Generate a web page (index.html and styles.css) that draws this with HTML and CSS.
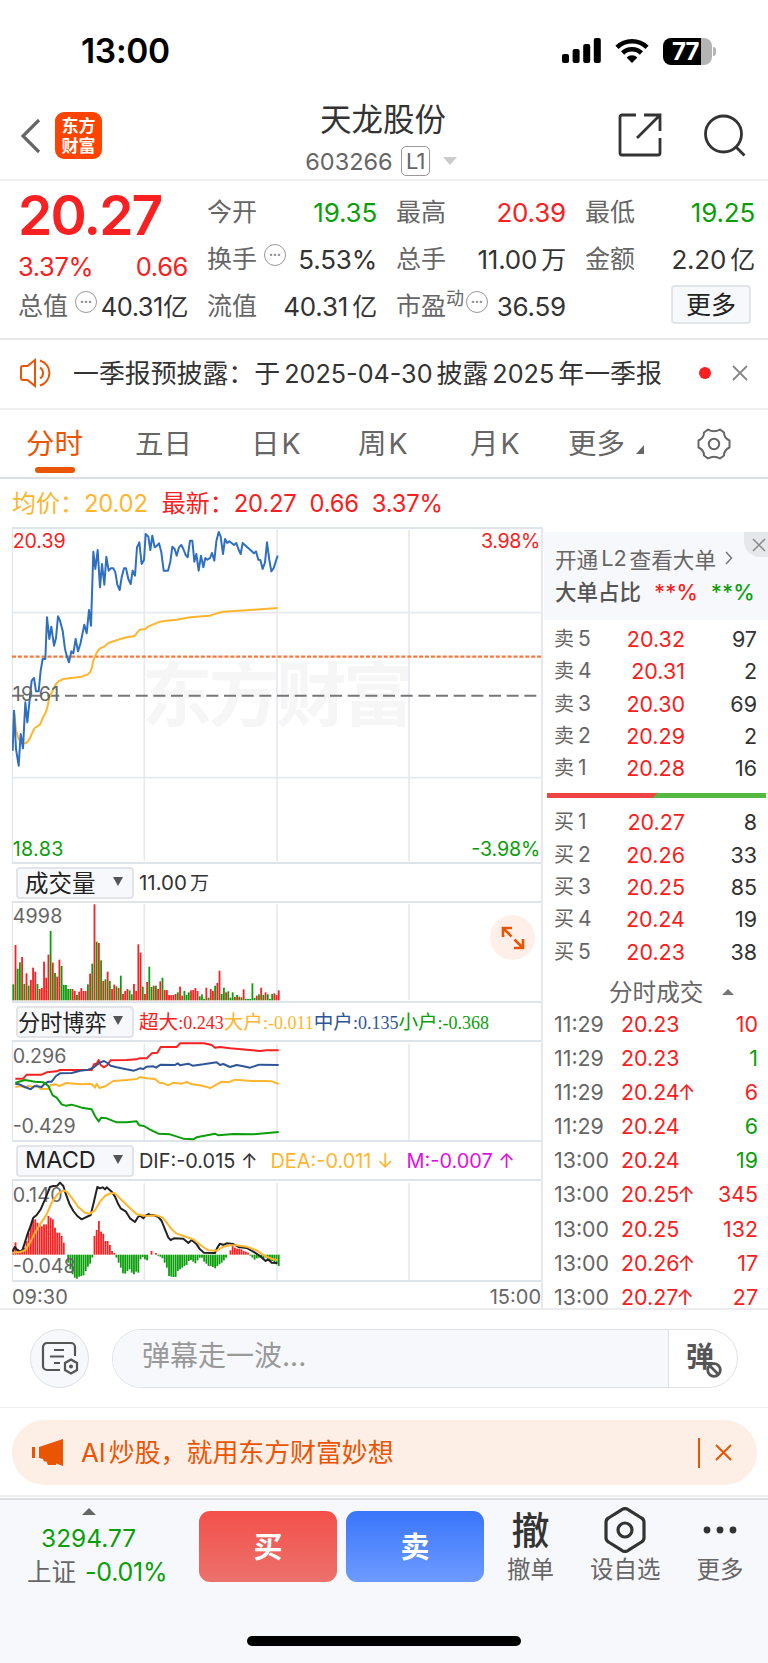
FILE: index.html
```html
<!DOCTYPE html>
<html lang="zh-CN">
<head>
  <meta charset="UTF-8" />
  <title>天龙股份 603266</title>
  <link rel="stylesheet" href="styles.css">
</head>
<body>
  <div class="status">
    <div class="clock">13:00</div>
    <div class="status-icons">
      <svg width="39" height="26" viewBox="0 0 39 26"><rect x="0" y="16" width="7" height="9" rx="2"/><rect x="10.6" y="11" width="7" height="14" rx="2"/><rect x="21.2" y="6" width="7" height="19" rx="2"/><rect x="31.8" y="0" width="7" height="25" rx="2"/></svg>
      <svg width="34" height="26" viewBox="0 0 34 26"><g fill="none" stroke="#000" stroke-width="4.6"><path d="M2 9.3A21.5 21.5 0 0 1 32 9.3"/><path d="M7.6 15A13.6 13.6 0 0 1 26.4 15"/></g><path d="M17 25l-5.4-5.6a7.8 7.8 0 0 1 10.8 0z"/></svg>
      <div class="battery"><span>77</span></div>
    </div>
  </div>

  <header class="header">
    <svg class="back" width="21" height="36" viewBox="0 0 21 36"><path d="M19 2L3 18l16 16" fill="none" stroke="#666" stroke-width="3.2"/></svg>
    <div class="logo">东方<br>财富</div>
    <div class="stock">
      <div class="stock-name">天龙股份</div>
      <div class="stock-code">603266<span class="level">L1</span><i class="tri-down"></i></div>
    </div>
    <svg class="share" width="44" height="44" viewBox="0 0 44 44"><path d="M18 2H4a2 2 0 0 0-2 2v36a2 2 0 0 0 2 2h36a2 2 0 0 0 2-2V25M26 2h16v16M42 2L19 25" fill="none" stroke="#333" stroke-width="2.8"/></svg>
    <svg class="search" width="44" height="44" viewBox="0 0 44 44"><circle cx="20.5" cy="20" r="18" fill="none" stroke="#333" stroke-width="2.8"/><path d="M33 33l8.500 8.500" stroke="#333" stroke-width="2.800"/></svg>
  </header>

  <section class="quote">
    <div class="quote-main">
      <div class="price">20.27</div>
      <div class="change red"><span>3.37%</span><span>0.66</span></div>
      <div class="cell cap"><span class="lbl">总值<i class="dots">•••</i></span><span class="val">40.31亿</span></div>
    </div>
    <div class="quote-grid">
      <div class="cell"><span class="lbl">今开</span><span class="val green">19.35</span></div>
      <div class="cell"><span class="lbl">最高</span><span class="val red">20.39</span></div>
      <div class="cell"><span class="lbl">最低</span><span class="val green">19.25</span></div>
      <div class="cell"><span class="lbl">换手<i class="dots">•••</i></span><span class="val">5.53%</span></div>
      <div class="cell"><span class="lbl">总手</span><span class="val">11.00<b>万</b></span></div>
      <div class="cell"><span class="lbl">金额</span><span class="val">2.20<b>亿</b></span></div>
      <div class="cell"><span class="lbl">流值</span><span class="val">40.31<b>亿</b></span></div>
      <div class="cell"><span class="lbl">市盈<sup>动</sup><i class="dots tight">•••</i></span><span class="val">36.59</span></div>
      <div class="cell end"><button class="more">更多</button></div>
    </div>
  </section>

  <section class="notice">
    <svg width="34" height="30" viewBox="0 0 34 30"><g fill="none" stroke="#ea5504" stroke-width="2"><path d="M15 2L7.500 8H3a2 2 0 0 0-2 2v10a2 2 0 0 0 2 2h4.500l7.500 6z"/><path d="M20 9.500a6.500 6.500 0 0 1 0 11M20 2.500a13 13 0 0 1 0 25"/></g></svg>
    <p>一季报预披露：于<span>2025-04-30</span>披露<span>2025</span>年一季报</p>
    <i class="dot"></i>
    <svg width="16" height="16" viewBox="0 0 16 16"><path d="M1 1l14 14M15 1L1 15" stroke="#888" stroke-width="1.800"/></svg>
  </section>

  <nav class="tabs">
    <a class="active">分时</a><a>五日</a><a>日<span>K</span></a><a>周<span>K</span></a><a>月<span>K</span></a>
    <a>更多<i class="corner"></i></a>
    <svg width="34" height="32" viewBox="0 0 34 32"><g fill="none" stroke="#666" stroke-width="2"><path d="M11 1.500Q17 5 23 1.500L27 4.500Q27 10 32.500 12.500V19.500Q27 22 27 27.500L23 30.500Q17 27 11 30.500L7 27.500Q7 22 1.500 19.500V12.500Q7 10 7 4.500Z" stroke-linejoin="round"/><circle cx="17" cy="16" r="5.200"/></g></svg>
  </nav>

  <div class="legend"><span class="yellow">均价：<b>20.02</b></span><span class="red">最新：<b>20.27</b><b>0.66</b><b>3.37%</b></span></div>

  <main class="board">
    <div class="charts">
      <div class="panel panel-price">
        <svg width="530" height="335" viewBox="36 22 1590 1005">
          <g fill="#f6f6f6"><text class="watermark" x="425" y="602" textLength="816">东方财富</text></g>
          <path class="grid-line" d="M433 28V1020M831 28V1020M1227 28V1020M36 276H1626M36 771H1626"/>
          <path class="last" d="M36 408H1626"/>
          <path class="close" d="M36 525H1618"/>
          <polyline class="avg" points="40,620 43,578 48,630 56,655 68,668 76,668 84,662 90,652 96,638 104,622 120,612 128,592 136,578 142,560 148,532 160,505 168,490 176,482 190,475 245,468 262,462 270,455 276,440 280,420 286,405 292,392 300,383 312,378 325,367 358,356 380,350 404,346 412,335 420,327 436,325 444,318 480,303 500,300 530,297 570,290 630,285 650,278 670,273 750,268 833,262"/>
          <polyline class="price-line" points="38,690 42,570 48,685 56,735 62,640 69,683 76,545 82,605 95,480 102,472 108,512 116,512 122,450 128,415 136,415 141,290 148,355 154,318 162,375 168,352 174,287 180,300 188,330 195,385 201,408 207,425 214,392 220,398 227,355 234,392 241,370 253,312 260,338 267,268 273,315 280,93 286,145 293,88 300,200 306,130 313,192 319,108 326,150 332,143 340,143 346,155 352,192 359,208 365,170 372,143 378,143 385,175 392,190 398,150 405,165 411,80 418,65 425,130 432,118 437,40 445,48 451,88 457,45 464,80 471,75 477,68 484,95 491,150 504,150 511,123 517,78 524,85 530,105 537,80 544,73 550,85 557,103 563,110 570,60 577,60 583,123 589,100 596,150 603,105 610,140 616,112 622,117 630,112 636,97 643,120 649,62 656,34 662,48 669,100 675,55 682,67 688,62 702,73 709,67 715,85 722,100 728,67 762,98 768,92 775,117 781,118 788,145 795,125 801,65 808,118 814,152 821,142 833,105"/>
          <g class="axis">
            <text x="38" y="81" class="f-red" textLength="159">20.39</text>
            <text x="38" y="542" textLength="140">19.61</text>
            <text x="38" y="1005" class="f-green" textLength="152">18.83</text>
            <text x="1443" y="81" class="f-red" textLength="178">3.98%</text>
            <text x="1414" y="1005" class="f-green" textLength="207">-3.98%</text>
          </g>
        </svg>
      </div>

      <div class="bar-head"><button>成交量<i></i></button><span class="num">11.00<b>万</b></span></div>
      <div class="panel panel-volume">
        <svg width="530" height="100" viewBox="36 123 1590 300">
          <path class="grid-line" d="M433 130V418M831 130V418M1227 130V418"/>
          <g id="volume"></g>
          <g class="axis"><text x="38" y="187" textLength="149">4998</text></g>
        </svg>
        <div class="expand"><svg width="24" height="24" viewBox="0 0 24 24"><path d="M2 11V2h9M2.500 2.500l8 8M13.500 13.500l8 8M13 22h9v-9" fill="none" stroke="#ea5504" stroke-width="2.600"/></svg></div>
      </div>

      <div class="bar-head game"><button>分时博弈<i></i></button><p><span class="red">超大<b>:0.243</b></span><span class="yellow">大户<b>:-0.011</b></span><span class="blue">中户<b>:0.135</b></span><span class="green">小户<b>:-0.368</b></span></p></div>
      <div class="panel panel-game">
        <svg width="530" height="101" viewBox="36 540 1590 303">
          <path class="grid-line" d="M433 548V838M831 548V838M1227 548V838"/>
          <g class="axis"><text x="38" y="605" textLength="161">0.296</text><text x="38" y="817" textLength="189">-0.429</text></g>
          <polyline class="line s-yellow" points="46,678 60,675 75,680 85,675 100,678 110,672 122,684 145,683 152,672 168,670 178,675 200,666 240,670 270,668 278,672 285,680 290,668 298,681 315,676 340,660 380,657 410,654 420,648 440,652 465,654 478,665 490,667 505,673 520,665 545,668 560,663 575,670 600,673 632,681 645,673 665,662 685,664 705,656 755,660 790,660 815,661 836,669"/>
          <polyline class="line s-red" points="46,653 70,653 80,641 125,641 140,634 170,631 180,627 275,627 282,610 290,608 296,597 302,612 312,619 322,612 332,598 380,597 410,595 418,592 440,592 455,577 472,575 482,558 530,558 540,547 612,547 635,552 645,560 660,558 690,562 740,566 780,570 800,568 836,568"/>
          <polyline class="line s-blue" points="46,668 58,670 75,678 92,685 104,675 125,678 132,670 145,662 155,662 168,645 180,637 215,636 240,629 265,626 280,620 290,612 300,605 312,600 322,606 332,614 350,619 375,624 402,629 420,622 430,624 440,617 460,616 468,620 482,611 525,612 533,607 540,613 565,608 578,614 610,610 650,604 660,612 670,609 690,618 710,612 730,616 750,620 778,611 836,612"/>
          <polyline class="line s-green" points="46,665 75,657 105,662 130,664 145,675 158,703 170,710 185,730 197,734 215,731 245,740 275,745 285,765 296,781 304,770 320,772 350,784 380,784 410,781 418,793 432,795 450,806 475,818 510,820 550,833 580,835 590,829 645,818 655,823 700,819 760,820 836,813"/>
        </svg>
      </div>

      <div class="bar-head macd"><button>MACD<i></i></button><p><span>DIF:-0.015 ↑</span><span class="yellow">DEA:-0.011 ↓</span><span class="magenta">M:-0.007 ↑</span></p></div>
      <div class="panel panel-macd">
        <svg width="530" height="102" viewBox="36 297 1590 306">
          <path class="grid-line" d="M433 306V596M831 306V596M1227 306V596"/>
          <g id="macd"></g>
          <g class="axis"><text x="38" y="363" textLength="150">0.140</text><text x="38" y="575" textLength="189">-0.048</text></g>
          <polyline class="line s-black" points="38,512 44,498 52,507 62,512 68,505 76,480 84,455 90,440 100,410 110,402 122,385 135,355 150,318 160,315 172,314 180,305 190,315 196,335 208,368 220,390 232,405 245,415 272,402 280,370 292,318 300,322 308,319 315,325 320,319 335,332 345,347 355,370 362,382 378,392 390,412 405,423 414,408 420,404 430,412 437,404 446,399 452,403 460,402 475,408 485,420 495,445 505,470 512,477 522,472 550,473 565,486 575,477 590,490 600,505 612,515 645,516 652,500 660,488 670,492 680,487 700,489 715,498 740,501 765,515 780,525 797,540 804,535 815,545 832,546"/>
          <polyline class="line s-yellow" points="38,515 60,513 75,508 90,485 105,455 120,430 140,400 155,365 172,340 190,328 200,332 215,350 235,378 255,395 270,398 285,388 300,362 315,345 330,337 345,337 360,352 380,372 410,400 440,405 470,403 488,410 500,425 515,445 530,458 550,465 580,475 605,495 625,508 650,509 670,497 690,493 710,493 740,497 770,508 795,525 820,535 833,537"/>
        </svg>
      </div>
      <div class="times"><span>09:30</span><span>15:00</span></div>
    </div>

    <aside class="side">
      <div class="l2">
        <div class="l2-link">开通<span>L2</span>查看大单<svg width="8" height="14" viewBox="0 0 8 14"><path d="M1 1l5.500 6L1 13" fill="none" stroke="#777" stroke-width="1.500"/></svg></div>
        <div class="l2-ratio">大单占比<span class="red">**%</span><span class="green">**%</span></div>
        <div class="l2-close"><svg width="14" height="14" viewBox="0 0 14 14"><path d="M1 1l12 12M13 1L1 13" stroke="#888" stroke-width="1.500"/></svg></div>
      </div>
      <div class="book">
        <div><span>卖<b>5</b></span><em>20.32</em><u>97</u></div>
        <div><span>卖<b>4</b></span><em>20.31</em><u>2</u></div>
        <div><span>卖<b>3</b></span><em>20.30</em><u>69</u></div>
        <div><span>卖<b>2</b></span><em>20.29</em><u>2</u></div>
        <div><span>卖<b>1</b></span><em>20.28</em><u>16</u></div>
      </div>
      <div class="ratio"></div>
      <div class="book">
        <div><span>买<b>1</b></span><em>20.27</em><u>8</u></div>
        <div><span>买<b>2</b></span><em>20.26</em><u>33</u></div>
        <div><span>买<b>3</b></span><em>20.25</em><u>85</u></div>
        <div><span>买<b>4</b></span><em>20.24</em><u>19</u></div>
        <div><span>买<b>5</b></span><em>20.23</em><u>38</u></div>
      </div>
      <div class="deal-title">分时成交<i></i></div>
      <div class="deals">
        <div><span>11:29</span><em>20.23</em><u class="red">10</u></div>
        <div><span>11:29</span><em>20.23</em><u class="green">1</u></div>
        <div><span>11:29</span><em>20.24<s>↑</s></em><u class="red">6</u></div>
        <div><span>11:29</span><em>20.24</em><u class="green">6</u></div>
        <div><span>13:00</span><em>20.24</em><u class="green">19</u></div>
        <div><span>13:00</span><em>20.25<s>↑</s></em><u class="red">345</u></div>
        <div><span>13:00</span><em>20.25</em><u class="red">132</u></div>
        <div><span>13:00</span><em>20.26<s>↑</s></em><u class="red">17</u></div>
        <div><span>13:00</span><em>20.27<s>↑</s></em><u class="red">27</u></div>
      </div>
    </aside>
  </main>

  <section class="danmu">
    <div class="round"><svg width="38" height="36" viewBox="0 0 38 36"><g fill="none" stroke="#555" stroke-width="2.200"><path d="M19 29H6a4 4 0 0 1-4-4V6a4 4 0 0 1 4-4h24a4 4 0 0 1 4 4v9"/><path d="M13 9h10M9 15.500h14M13 22h6"/><path d="M30 18.500l6 3.500v7l-6 3.500-6-3.500v-7z"/></g><circle cx="30" cy="25.500" r="2" fill="#555"/></svg></div>
    <div class="field">
      <div class="placeholder">弹幕走一波...</div>
      <div class="toggle">弹<svg width="16" height="16" viewBox="0 0 16 16"><circle cx="8" cy="8" r="6.300" fill="#fff" stroke="#555" stroke-width="2.800"/><path d="M4 4l8 8" stroke="#555" stroke-width="2.600"/></svg></div>
    </div>
  </section>

  <section class="promo">
    <div class="promo-box">
      <svg width="31" height="27" viewBox="0 0 31 27"><path d="M0 8h3v11H0zM7 8L31 0v27l-7-2.500V26h-8l-1.500-3.500H12L11 20l-4-1z" fill="#ea5504"/></svg>
      <p>AI<span>炒股，就用东方财富妙想</span></p>
      <i class="bar"></i>
      <svg width="17" height="17" viewBox="0 0 17 17"><path d="M1 1l15 15M16 1L1 16" stroke="#ea5504" stroke-width="2"/></svg>
    </div>
  </section>

  <footer class="footer">
    <div class="index"><i></i><div class="green">3294.77</div><div>上证 <span class="green">-0.01%</span></div></div>
    <button class="buy">买</button>
    <button class="sell">卖</button>
    <div class="tool t1"><div class="glyph">撤</div>撤单</div>
    <div class="tool t2"><div class="glyph"><svg width="42" height="46" viewBox="0 0 42 46"><g fill="none" stroke="#333" stroke-width="3.200"><path d="M17.500 2.800a6 6 0 0 1 7 0l13 8.200a5 5 0 0 1 2.500 4.300v15.400a5 5 0 0 1-2.500 4.300l-13 8.200a6 6 0 0 1-7 0l-13-8.200A5 5 0 0 1 2 30.700V15.300A5 5 0 0 1 4.500 11z"/><circle cx="21" cy="23" r="7"/></g></svg></div>设自选</div>
    <div class="tool t3"><div class="glyph"><svg width="34" height="8" viewBox="0 0 34 8"><g fill="#333"><circle cx="4" cy="4" r="3.400"/><circle cx="17" cy="4" r="3.400"/><circle cx="30" cy="4" r="3.400"/></g></svg></div>更多</div>
    <div class="home"></div>
  </footer>

  <script>
    const STEP = 6.58;
    const START = 40;

    // one entry per minute: r = up, g = down, number = top of the bar
    const volume = "g370 r252 g323 g304 r288 g369 r337 g374 r357 r320 r332 g369 r384 r381 r302 r350 r281 g210 r305 g336 r347 r296 g315 g372 g372 g384 g384 r384 r390 g402 r392 r381 r390 r390 g370 r338 g308 r130 g242 r246 g298 r360 g355 r332 g360 r384 r371 g376 r381 g344 r399 r390 r384 g388 g400 r369 r390 r250 r275 g377 r399 r363 g317 g378 r374 g374 r384 r361 g350 r387 r387 r402 r402 r402 r399 g394 r377 r404 g390 g402 g394 r388 r387 r381 r390 g406 g400 g414 r380 g410 r384 r390 g374 r366 r329 g399 g380 r394 g391 g410 g394 r408 g402 r407 g409 r385 g414 g414 g414 g367 g411 r404 g400 r380 g402 r394 g400 g414 g399 r397 r402 r388".split(" ");

    const macd = [503,484,505,512,508,500,480,455,432,415,415,425,432,436,430,430,405,410,415,440,455,455,465,485,
      521,545,565,580,590,593,587,585,583,570,557,548,530,465,447,420,452,458,480,480,492,510,516,
      530,545,560,577,578,570,565,575,580,572,575,535,528,535,538,521,510,521,516,524,527,532,545,560,585,587,588,588,
      570,565,560,555,552,540,537,542,547,538,530,530,542,548,555,555,558,562,555,550,545,538,530,521,
      508,495,500,503,503,505,510,512,515,524,530,536,532,530,530,536,530,535,540,540,545,550,555,545,538,532,530];

    function bar(group, i, top, base, color) {
      const r = document.createElementNS("http://www.w3.org/2000/svg", "rect");
      r.setAttribute("x", START + i * STEP - 2.7);
      r.setAttribute("y", Math.min(top, base));
      r.setAttribute("width", 5.4);
      r.setAttribute("height", Math.abs(top - base));
      r.setAttribute("fill", color);
      group.appendChild(r);
    }

    const volumeGroup = document.getElementById("volume");
    volume.forEach((v, i) => {
      bar(volumeGroup, i, Number(v.slice(1)), 418, v[0] === "r" ? "#f82020" : "#0a9e0a");
    });

    const macdGroup = document.getElementById("macd");
    macd.slice(0, 122).forEach((v, i) => {
      bar(macdGroup, i, v, 521, v < 521 ? "#f82020" : "#0a9e0a");
    });
  </script>
</body>
</html>
```
FILE: styles.css
```css
* {
  box-sizing: border-box;
}
body {
  margin: 0;
  width: 768px;
  background: #fff;
  color: #333;
  font-family: Inter, "Noto Sans CJK SC", sans-serif;
  overflow-x: hidden;
}
p {
  margin: 0;
}
i, em {
  font-style: normal;
}
u, s {
  text-decoration: none;
}
b {
  font-weight: 400;
}
button {
  font-family: inherit;
  padding: 0;
}
svg {
  display: block;
  flex: none;
}
.red { color: #f82020; }
.green { color: #0a9e0a; }
.yellow { color: #ffb52e; }
.blue { color: #2f5597; }
.magenta { color: #e010e0; }

/* status bar */
.status {
  height: 101px;
  padding: 1px 51px 0 81px;
  display: flex;
  align-items: center;
  justify-content: space-between;
}
.clock {
  font-size: 33.500px;
  font-weight: 600;
  color: #000;
  letter-spacing: -0.300px;
}
.status-icons {
  display: flex;
  align-items: center;
  gap: 14px;
}
.battery {
  width: 49px;
  height: 27px;
  border-radius: 8px;
  background: linear-gradient(to right, #000 77%, #b4b4b4 77%);
  color: #fff;
  font-size: 24px;
  font-weight: 700;
  line-height: 27px;
  padding-left: 9px;
  letter-spacing: -1px;
  margin-right: 5px;
  position: relative;
}
.battery::after {
  content: "";
  position: absolute;
  right: -4px;
  top: 9px;
  width: 3px;
  height: 9px;
  border-radius: 0 4px 4px 0;
  background: #b4b4b4;
}

/* header */
.header {
  height: 80px;
  padding-left: 20px;
  display: flex;
  align-items: flex-start;
  border-bottom: 2px solid #efefef;
}
.back {
  margin-top: 17px;
}
.logo {
  width: 47px;
  height: 47px;
  margin: 11px 0 0 14px;
  padding-top: 5px;
  border-radius: 9px;
  background: #ff4400;
  color: #fff;
  font-size: 17px;
  line-height: 19.500px;
  font-weight: 700;
  text-align: center;
}
.stock {
  width: 300px;
  margin-left: 131px;
  text-align: center;
}
.stock-name {
  padding-top: 1px;
  font-size: 31.500px;
  line-height: 36px;
}
.stock-code {
  display: flex;
  align-items: center;
  justify-content: center;
  margin-top: 7px;
  height: 32px;
  padding-right: 4px;
  font-size: 23.500px;
  letter-spacing: 0;
  color: #666;
}
.level {
  width: 29px;
  height: 30px;
  margin: 0 13px 0 8px;
  border: 1.5px solid #999;
  border-radius: 5px;
  line-height: 28px;
  font-size: 22px;
  letter-spacing: -1px;
}
.tri-down {
  border: 7px solid transparent;
  border-top: 8px solid #ccc;
  border-bottom: 0;
}
.share {
  margin: 12px 0 0 85px;
}
.search {
  margin: 13px 0 0 41px;
}

/* quote */
.quote {
  height: 159px;
  padding: 0 13px 0 18px;
  display: flex;
  border-bottom: 2px solid #e8e8e8;
}
.quote-main {
  width: 170px;
  margin-right: 19px;
}
.price {
  height: 68px;
  line-height: 69px;
  font-size: 55px;
  font-weight: 600;
  letter-spacing: -1.800px;
  color: #f82020;
}
.change {
  display: flex;
  justify-content: space-between;
  height: 34px;
  line-height: 35px;
  font-size: 25.500px;
  letter-spacing: -0.400px;
}
.quote-grid {
  display: grid;
  grid-template-columns: 170px 170px 170px;
  grid-template-rows: repeat(3, 47px);
  column-gap: 19px;
  padding-top: 8px;
  flex: none;
}
.cell {
  display: flex;
  justify-content: space-between;
  height: 47px;
  line-height: 47px;
}
.lbl {
  display: flex;
  font-size: 25px;
  color: #666;
  white-space: nowrap;
}
.lbl sup {
  font-size: 18px;
  line-height: 32px;
}
.val {
  font-size: 26px;
  letter-spacing: -0.200px;
  white-space: nowrap;
}
.val b {
  margin-left: 4px;
  font-size: 25px;
}
.dots {
  width: 22px;
  height: 22px;
  margin: 8px 0 0 7px;
  border: 1.5px solid #999;
  border-radius: 50%;
  font-size: 7px;
  line-height: 19px;
  text-align: center;
  color: #888;
}
.dots.tight {
  margin-left: 2px;
}
.cap .val {
  font-size: 25.500px;
  letter-spacing: -0.500px;
}
.end {
  justify-content: flex-end;
  padding: 2px 4px 0 0;
}
.more {
  width: 80px;
  height: 39px;
  border: 2px solid #e2e4ea;
  border-radius: 4px;
  background: #f7f8fb;
  font-size: 25px;
  color: #222;
  line-height: 34px;
}

/* notice */
.notice {
  height: 70px;
  padding: 0 20px 2px 20px;
  display: flex;
  align-items: center;
  border-bottom: 2px solid #efefef;
}
.notice p {
  width: 592px;
  margin: -4px 0 0 19px;
  font-size: 25.900px;
  white-space: nowrap;
}
.notice p span {
  margin: 0 4px;
  font-size: 25.200px;
}
.dot {
  width: 12px;
  height: 12px;
  margin: 0 21px 0 34px;
  border-radius: 50%;
  background: #f82020;
}

/* tabs */
.tabs {
  height: 69px;
  padding-left: 26px;
  display: grid;
  grid-template-columns: 109px 116px 107px 112px 98px 129px 40px;
  align-items: center;
  border-bottom: 2px solid #dcdee6;
  font-size: 28.500px;
  color: #666;
}
.tabs a {
  position: relative;
  line-height: 67px;
}
.tabs span {
  margin-left: 2px;
}
.tabs .active {
  color: #ea5504;
}
.tabs .active::after {
  content: "";
  position: absolute;
  left: 9px;
  bottom: 4px;
  width: 40px;
  height: 6px;
  border-radius: 3px;
  background: #ea5504;
}
.corner {
  display: inline-block;
  margin-left: 11px;
  border-left: 8px solid transparent;
  border-bottom: 9px solid #666;
}
.legend {
  height: 48px;
  padding-left: 12px;
  display: flex;
  gap: 14px;
  font-size: 24px;
  line-height: 50px;
  white-space: nowrap;
}
.legend b {
  display: inline-block;
  font-size: 23.800px;
  letter-spacing: -0.200px;
}
.legend b + b {
  margin-left: 13px;
}

/* board */
.board {
  height: 783px;
  display: flex;
  border-bottom: 2px solid #ececf0;
}
.charts {
  width: 543px;
  padding-left: 12px;
  border-right: 2px solid #e6e8ee;
}
.panel {
  position: relative;
  border: solid #dfe3ea;
  border-width: 2px 0;
  box-shadow: inset 1px 0 #dfe3ea;
}
.panel svg {
  margin: -1px 0;
}
.panel-price { height: 337px; }
.panel-volume { height: 102px; }
.panel-game { height: 102px; }
.panel-macd { height: 103px; }
.grid-line {
  stroke: #e6e9f0;
  stroke-width: 5;
}
.watermark {
  font-size: 212px;
  font-weight: 700;
}
.last {
  stroke: #f47a3c;
  stroke-width: 7;
  stroke-dasharray: 12 5.700;
}
.close {
  stroke: #777;
  stroke-width: 6;
  stroke-dasharray: 36 17;
}
polyline {
  fill: none;
  stroke-linejoin: round;
}
.avg {
  stroke: #ffb52e;
  stroke-width: 6;
}
.price-line {
  stroke: #2f6fc0;
  stroke-width: 6;
}
.axis {
  font-size: 59px;
  fill: #666;
}
.f-red { fill: #f82020; }
.f-green { fill: #0a9e0a; }
.line { stroke-width: 6; }
.s-red { stroke: #f82020; }
.s-yellow { stroke: #ffb52e; }
.s-blue { stroke: #2f5597; }
.s-green { stroke: #0a9e0a; }
.s-black { stroke: #222; }
.bar-head {
  height: 37px;
  padding-left: 4px;
  display: flex;
  align-items: center;
  font-size: 21px;
  white-space: nowrap;
}
.bar-head button {
  width: 118px;
  height: 32px;
  margin-right: 5px;
  border: 2px solid #e2e4ea;
  border-radius: 4px;
  background: #f7f8fb;
  display: flex;
  align-items: center;
  justify-content: space-between;
  padding: 0 9px 2px 7px;
  font-size: 23.500px;
  color: #222;
}
.bar-head button i {
  border: 5px solid transparent;
  border-top: 9px solid #555;
  border-bottom: 0;
}
.bar-head .num {
  margin-top: -2px;
  font-size: 20.500px;
}
.bar-head .num b {
  margin-left: 3px;
  font-size: 19px;
}
.game button {
  padding-left: 0;
  font-size: 22.200px;
}
.game p {
  margin-top: -2px;
  font-family: "Liberation Serif", "Noto Sans CJK SC", serif;
  font-size: 19.600px;
}
.game p b {
  font-size: 18px;
}
.macd p {
  display: flex;
  gap: 13px;
  font-size: 19.900px;
}
.expand {
  position: absolute;
  right: 6px;
  top: 12px;
  width: 45px;
  height: 45px;
  border-radius: 50%;
  background: #fef0e9;
  display: grid;
  place-items: center;
}
.times {
  display: flex;
  justify-content: space-between;
  height: 26px;
  font-size: 20px;
  line-height: 30px;
  color: #666;
}

/* order book */
.side {
  flex: 1;
}
.l2 {
  position: relative;
  height: 88px;
  margin: 5px 0 3px 1px;
  padding: 9px 0 0 11px;
  background: #f7f8fb;
  overflow: hidden;
}
.l2-link {
  display: flex;
  align-items: center;
  height: 34px;
  font-size: 21.600px;
  color: #666;
}
.l2-link span {
  margin: 0 3px;
}
.l2-link svg {
  margin-left: 9px;
}
.l2-ratio {
  height: 34px;
  line-height: 34px;
  font-size: 21.500px;
  font-weight: 500;
  color: #555;
}
.l2-ratio span {
  margin-left: 13px;
}
.l2-close {
  position: absolute;
  right: 0;
  top: 0;
  width: 24px;
  height: 25px;
  border-radius: 0 0 0 16px;
  background: #e6e7ea;
  display: grid;
  place-items: center;
  padding-left: 5px;
}
.book > div {
  display: grid;
  grid-template-columns: 60px 71px 72px;
  padding-left: 11px;
  height: 32.300px;
  line-height: 32.300px;
  font-size: 21.500px;
}
.book span, .deals span {
  color: #666;
}
.book span {
  font-size: 20px;
}
.book b {
  margin-left: 4px;
  font-size: 21px;
}
.book em, .deals em {
  color: #f82020;
  letter-spacing: 0;
}
.book em, u {
  text-align: right;
}
.ratio {
  height: 5px;
  margin: 9px 2px 8px 4px;
  background: linear-gradient(135deg, #ee4444 0 49.500%, #55b840 49.500%);
}
.deal-title {
  height: 39px;
  padding: 10px 0 0 66px;
  font-size: 23.600px;
  line-height: 29px;
  color: #666;
  display: flex;
  align-items: center;
}
.deal-title i {
  margin-left: 19px;
  border: 6px solid transparent;
  border-bottom: 6px solid #777;
  border-top: 0;
}
.deals > div {
  display: grid;
  grid-template-columns: 67px 80px 57px;
  padding-left: 11px;
  height: 34.100px;
  line-height: 34.100px;
  font-size: 21.400px;
}
.deals s {
  margin-left: -2px;
}

/* bullet comments */
.danmu {
  height: 98px;
  padding: 19px 30px 0;
  display: flex;
  border-bottom: 1px solid #efefef;
}
.round {
  width: 59px;
  height: 59px;
  margin-right: 23px;
  border: 1.500px solid #dfe0e8;
  border-radius: 50%;
  background: #f7f8fb;
  display: grid;
  place-items: center;
}
.field {
  width: 626px;
  height: 59px;
  border: 1.500px solid #dfe0e8;
  border-radius: 30px;
  display: flex;
  overflow: hidden;
}
.placeholder {
  width: 556px;
  padding-left: 29px;
  border-right: 1.500px solid #dfe0e8;
  background: #f7f8fb;
  font-size: 28px;
  line-height: 52px;
  color: #999;
}
.toggle {
  position: relative;
  padding-left: 17px;
  font-size: 28px;
  line-height: 55px;
  font-weight: 700;
  color: #555;
}
.toggle svg {
  position: absolute;
  left: 37px;
  top: 32px;
}
.promo {
  height: 89px;
  padding: 12px 11px 0 12px;
  border-bottom: 2px solid #ededf0;
}
.promo-box {
  height: 65px;
  border-radius: 33px;
  background: #fdeee6;
  display: flex;
  align-items: center;
  padding: 0 25px 0 20px;
  color: #ea5504;
}
.promo-box p {
  flex: 1;
  margin: -4px 0 0 18px;
  font-size: 25.900px;
}
.promo-box p span {
  margin-left: 3px;
}
.bar {
  width: 2px;
  height: 30px;
  margin-right: 15px;
  background: #ea5504;
}

/* footer */
.footer {
  position: relative;
  height: 165px;
  margin-top: 1px;
  padding-left: 27px;
  display: flex;
  border-top: 2px solid #dcdee2;
  background: #f7f8fb;
}
.index {
  width: 172px;
  padding-top: 8px;
  padding-right: 50px;
  font-size: 24.500px;
  color: #666;
  line-height: 34px;
  white-space: nowrap;
}
.index i {
  display: block;
  width: 14px;
  margin-left: 55px;
  border: 7px solid transparent;
  border-bottom: 7px solid #666;
  border-top: 0;
}
.index div:nth-child(2) {
  padding-left: 14px;
  margin-top: 6px;
}
.index div span {
  margin-left: 2px;
  font-size: 25px;
  letter-spacing: -0.200px;
}
.buy, .sell {
  width: 138px;
  height: 71px;
  margin: 11px 9px 0 0;
  padding-bottom: 4px;
  border: 0;
  border-radius: 11px;
  color: #fff;
  font-size: 29px;
  font-weight: 700;
}
.buy { background: linear-gradient(#f4504a, #ec716c); }
.sell { background: linear-gradient(#3a76fb, #6d9aff); }
.tool {
  padding-top: 7px;
  text-align: center;
  font-size: 23.500px;
  line-height: 33px;
  color: #666;
}
.glyph {
  height: 46px;
  display: grid;
  place-items: center;
  font-size: 38px;
  line-height: 46px;
  font-weight: 500;
  color: #333;
}
.t1 { margin-left: 14px; }
.t2 { margin-left: 36px; }
.t3 { margin-left: 36px; }
.home {
  position: absolute;
  left: 247px;
  bottom: 17px;
  width: 274px;
  height: 10px;
  border-radius: 5px;
  background: #000;
}
```
